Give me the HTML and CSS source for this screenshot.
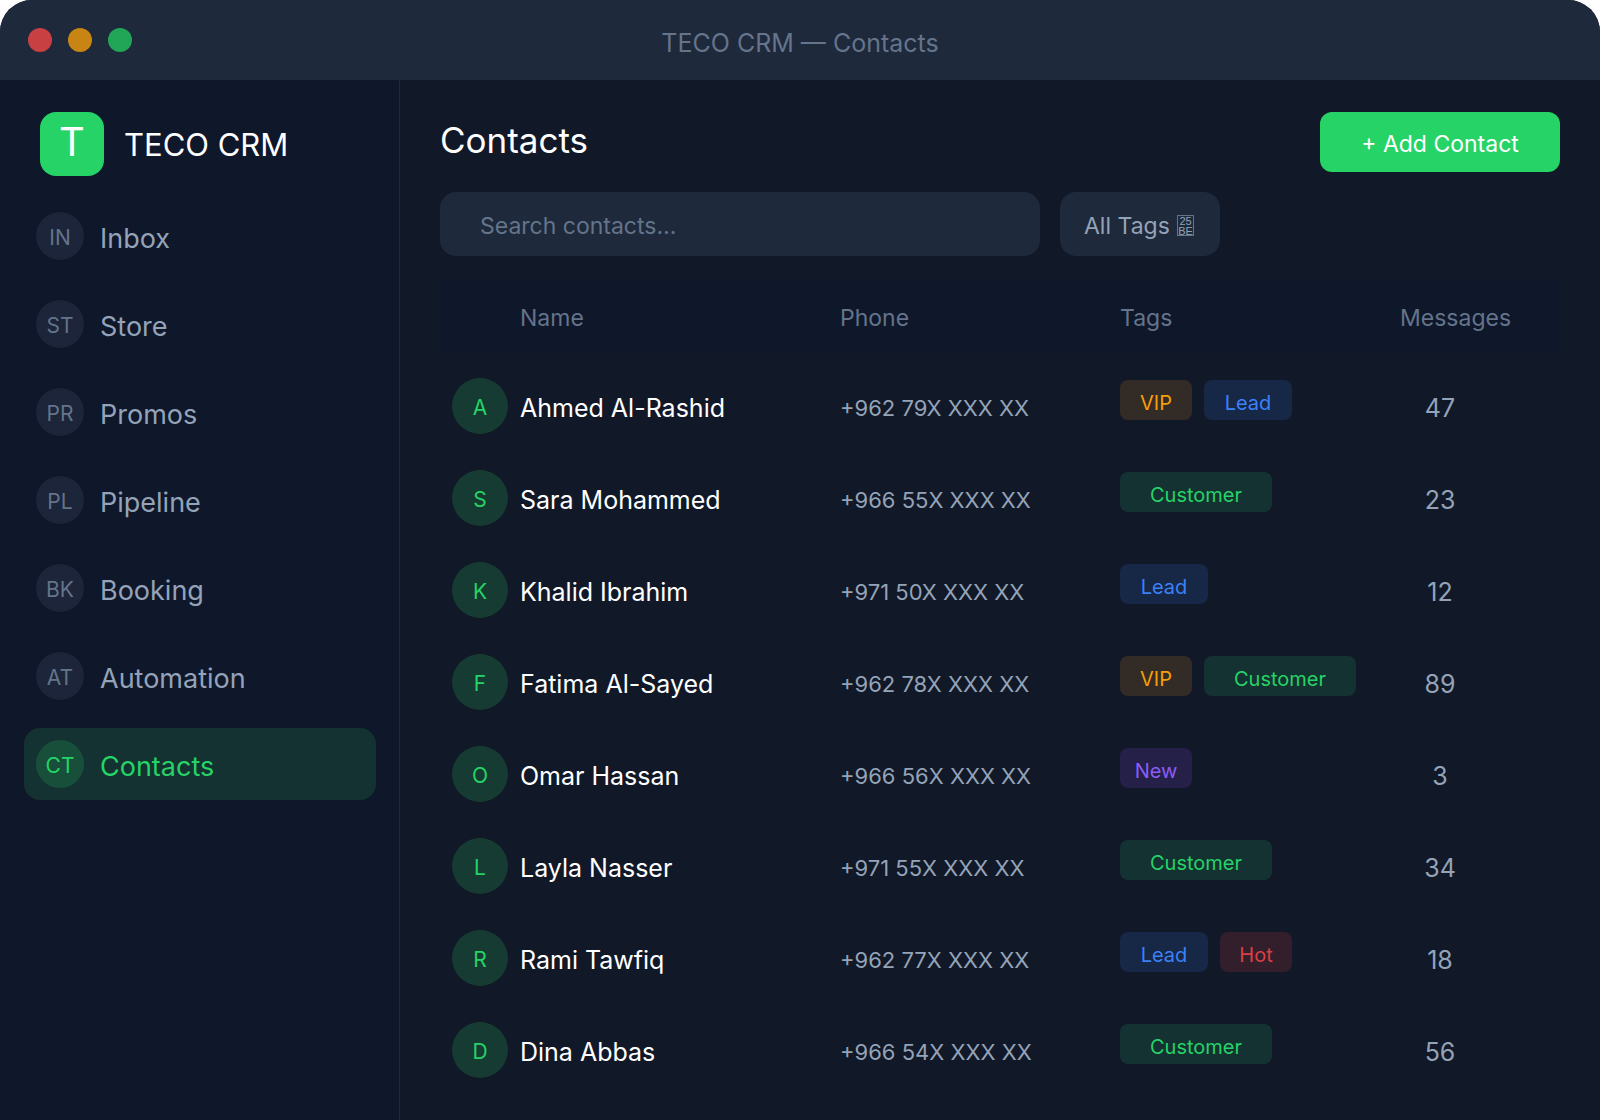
FILE: index.html
```html
<!DOCTYPE html>
<html lang="en">
<head>
<meta charset="utf-8">
<title>TECO CRM — Contacts</title>
<link rel="stylesheet" href="styles.css">
</head>
<body>
<div class="window">
  <header class="titlebar">
    <div class="lights">
      <span class="light light-red"></span>
      <span class="light light-amber"></span>
      <span class="light light-green"></span>
    </div>
    <div class="window-title">TECO CRM — Contacts</div>
  </header>
  <div class="body">
    <aside class="sidebar">
      <div class="brand">
        <span class="logo">T</span>
        <span class="brand-name">TECO CRM</span>
      </div>
      <nav class="nav">
        <a class="nav-item" href="#inbox"><span class="badge">IN</span><span class="nav-label">Inbox</span></a>
        <a class="nav-item" href="#store"><span class="badge">ST</span><span class="nav-label">Store</span></a>
        <a class="nav-item" href="#promos"><span class="badge">PR</span><span class="nav-label">Promos</span></a>
        <a class="nav-item" href="#pipeline"><span class="badge">PL</span><span class="nav-label">Pipeline</span></a>
        <a class="nav-item" href="#booking"><span class="badge">BK</span><span class="nav-label">Booking</span></a>
        <a class="nav-item" href="#automation"><span class="badge">AT</span><span class="nav-label">Automation</span></a>
        <a class="nav-item active" href="#contacts" aria-current="page"><span class="badge">CT</span><span class="nav-label">Contacts</span></a>
      </nav>
    </aside>
    <main class="main">
      <div class="heading">
        <h1 class="title">Contacts</h1>
        <button class="add" type="button">+ Add Contact</button>
      </div>
      <div class="filters">
        <input class="search" type="text" aria-label="Search contacts" placeholder="Search contacts…">
        <div class="tag-filter">
          <select class="tag-select" aria-label="Filter by tag"><option>All Tags</option></select>
          <span class="codebox" aria-hidden="true"><span>25</span><span>BE</span></span>
        </div>
      </div>
      <table class="contacts">
        <colgroup><col class="col-avatar"><col class="col-name"><col class="col-phone"><col class="col-tags"><col class="col-messages"></colgroup>
        <thead>
          <tr><th></th><th>Name</th><th>Phone</th><th>Tags</th><th>Messages</th></tr>
        </thead>
        <tbody>
          <tr><td><span class="avatar">A</span></td><td class="name">Ahmed Al-Rashid</td><td class="phone">+962 79X XXX XX</td><td><div class="tags"><span class="tag vip">VIP</span><span class="tag lead">Lead</span></div></td><td class="messages"><span class="count">47</span></td></tr>
          <tr><td><span class="avatar">S</span></td><td class="name">Sara Mohammed</td><td class="phone">+966 55X XXX XX</td><td><div class="tags"><span class="tag customer">Customer</span></div></td><td class="messages"><span class="count">23</span></td></tr>
          <tr><td><span class="avatar">K</span></td><td class="name">Khalid Ibrahim</td><td class="phone">+971 50X XXX XX</td><td><div class="tags"><span class="tag lead">Lead</span></div></td><td class="messages"><span class="count">12</span></td></tr>
          <tr><td><span class="avatar">F</span></td><td class="name">Fatima Al-Sayed</td><td class="phone">+962 78X XXX XX</td><td><div class="tags"><span class="tag vip">VIP</span><span class="tag customer">Customer</span></div></td><td class="messages"><span class="count">89</span></td></tr>
          <tr><td><span class="avatar">O</span></td><td class="name">Omar Hassan</td><td class="phone">+966 56X XXX XX</td><td><div class="tags"><span class="tag new">New</span></div></td><td class="messages"><span class="count">3</span></td></tr>
          <tr><td><span class="avatar">L</span></td><td class="name">Layla Nasser</td><td class="phone">+971 55X XXX XX</td><td><div class="tags"><span class="tag customer">Customer</span></div></td><td class="messages"><span class="count">34</span></td></tr>
          <tr><td><span class="avatar">R</span></td><td class="name">Rami Tawfiq</td><td class="phone">+962 77X XXX XX</td><td><div class="tags"><span class="tag lead">Lead</span><span class="tag hot">Hot</span></div></td><td class="messages"><span class="count">18</span></td></tr>
          <tr><td><span class="avatar">D</span></td><td class="name">Dina Abbas</td><td class="phone">+966 54X XXX XX</td><td><div class="tags"><span class="tag customer">Customer</span></div></td><td class="messages"><span class="count">56</span></td></tr>
        </tbody>
      </table>
    </main>
  </div>
</div>
</body>
</html>
```
FILE: styles.css
```css
* { box-sizing: border-box; }

body {
  margin: 0;
  background: #fff;
  color: #fff;
  font-family: Inter, "Liberation Sans", sans-serif;
  font-size: 23px;
  line-height: 32px;
}

.window {
  display: flex;
  flex-direction: column;
  min-height: 100vh;
  overflow: hidden;
  border-radius: 32px 32px 0 0;
  background: #111827;
}

.titlebar {
  display: grid;
  grid-template-columns: 1fr auto 1fr;
  align-items: center;
  height: 80px;
  padding: 0 28px;
  background: #1e293b;
}
.lights { display: flex; gap: 16px; }
.light { width: 24px; height: 24px; border-radius: 50%; }
.light-red { background: #c94043; }
.light-amber { background: #c98514; }
.light-green { background: #21a556; }
.window-title { padding-top: 6px; color: #64748b; font-size: 25px; }

.body { display: flex; flex: 1; }

.sidebar {
  flex: 0 0 400px;
  padding: 32px 23px 0 24px;
  border-right: 1px solid #1e293b;
  background: #0f172a;
}
.brand { display: flex; align-items: center; gap: 20px; padding-left: 16px; }
.logo {
  width: 64px;
  height: 64px;
  border-radius: 16px;
  background: #25d366;
  font-size: 40px;
  line-height: 60px;
  text-align: center;
}
.brand-name { padding-top: 2px; font-size: 31px; }

.nav { display: flex; flex-direction: column; gap: 16px; margin-top: 24px; }
.nav-item {
  display: flex;
  align-items: center;
  gap: 16px;
  height: 72px;
  padding: 0 12px;
  border-radius: 16px;
  color: #94a3b8;
  font-size: 27px;
  text-decoration: none;
}
.badge {
  width: 48px;
  height: 48px;
  border-radius: 50%;
  background: #1c2539;
  color: #64748b;
  font-size: 21px;
  line-height: 52px;
  text-align: center;
}
.nav-label { padding-top: 5px; }
.active { background: #143231; color: #25d366; }
.active .badge { background: #174f3a; color: #25d366; }

.main { flex: 1; padding: 32px 40px 24px; }
.heading { display: flex; justify-content: space-between; align-items: flex-start; }
.title { margin: 0; font-size: 35px; font-weight: 400; line-height: 56px; }
.add {
  width: 240px;
  height: 60px;
  padding: 4px 0 0;
  border: 0;
  border-radius: 12px;
  background: #25d366;
  color: #fff;
  font: inherit;
}

.filters { display: flex; gap: 20px; margin-top: 20px; }
.search {
  flex: 0 1 600px;
  height: 64px;
  padding: 3px 40px 0;
  border: 0;
  border-radius: 16px;
  background: #1e293b;
  color: #94a3b8;
  font: inherit;
}
.search::placeholder { color: #64748b; opacity: 1; }
.tag-filter { position: relative; width: 160px; }
.tag-select {
  width: 100%;
  height: 64px;
  padding: 4px 24px 0;
  border: 0;
  border-radius: 16px;
  appearance: none;
  background: #1e293b;
  color: #94a3b8;
  font: inherit;
}
.codebox {
  position: absolute;
  top: 23px;
  right: 26px;
  display: flex;
  flex-direction: column;
  align-items: center;
  width: 17px;
  height: 21px;
  border: 1px solid #64748b;
  color: #94a3b8;
  font-family: "Liberation Sans", sans-serif;
  font-size: 11px;
  line-height: 10px;
  pointer-events: none;
}

.contacts {
  width: 100%;
  margin-top: 24px;
  border-spacing: 0;
  table-layout: fixed;
}
.col-avatar { width: 80px; }
.col-name { width: 320px; }
.col-phone { width: 280px; }
.col-tags { width: 280px; }
.contacts th {
  height: 72px;
  padding: 4px 0 0;
  background: #0f172a;
  color: #64748b;
  font-weight: 400;
  text-align: left;
}
.contacts tbody::before { content: ""; display: block; height: 8px; }
.contacts td { height: 92px; padding: 0; }
.avatar {
  display: block;
  width: 56px;
  height: 56px;
  margin-left: 12px;
  border-radius: 50%;
  background: #163b32;
  color: #25d366;
  font-size: 21px;
  line-height: 60px;
  text-align: center;
}
.contacts .name,
.contacts .phone,
.contacts .messages { padding-top: 3px; }
.name { font-size: 25px; }
.phone { color: #94a3b8; font-size: 22px; }
.tags { display: flex; gap: 12px; padding-bottom: 12px; }
.tag {
  width: 72px;
  height: 40px;
  border-radius: 8px;
  font-size: 20px;
  line-height: 46px;
  text-align: center;
}
.vip { background: #332b25; color: #f59e0b; }
.lead { width: 88px; background: #172746; color: #3b82f6; }
.customer { width: 152px; background: #143231; color: #25d366; }
.new { background: #242047; color: #8b5cf6; }
.hot { background: #331f2b; color: #d94043; }
.count { display: block; width: 80px; color: #94a3b8; font-size: 25px; text-align: center; }
```
